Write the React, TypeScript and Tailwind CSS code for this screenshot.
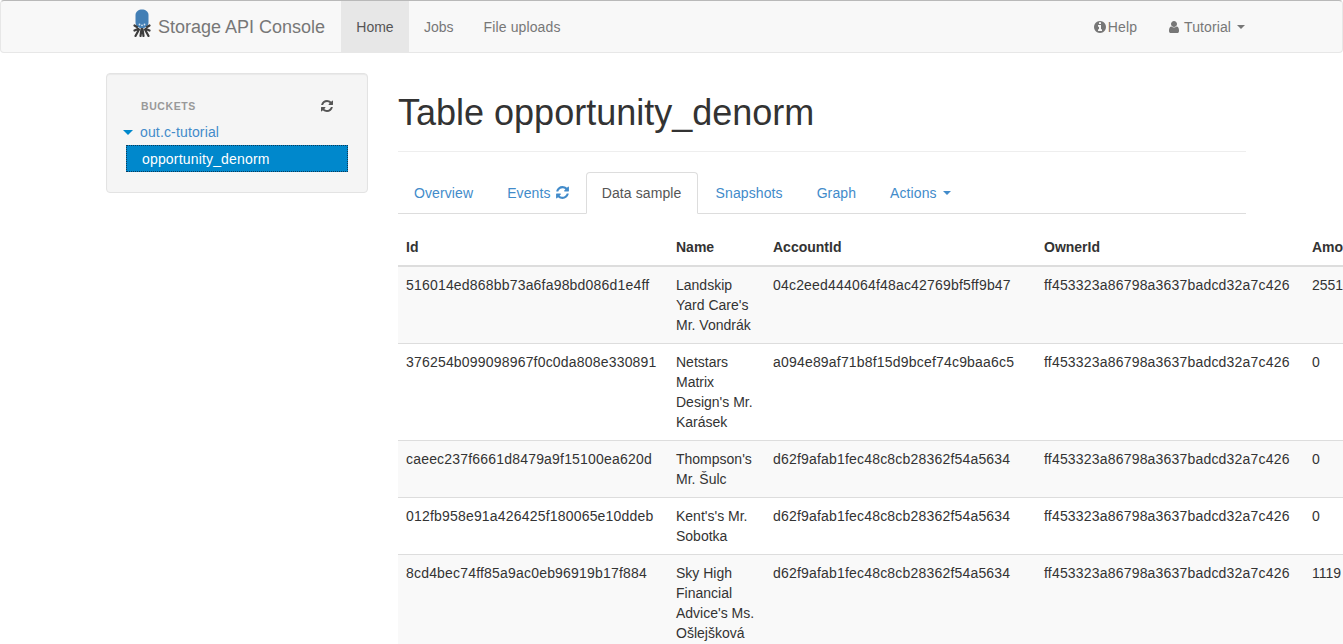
import React from "react";

const REFRESH = "M1639 1056q0 5-1 7-64 268-268 434.5t-478 166.5q-146 0-282.5-55t-243.5-157l-129 129q-19 19-45 19t-45-19-19-45v-448q0-26 19-45t45-19h448q26 0 45 19t19 45-19 45l-137 137q71 66 161 102t187 36q134 0 250-65t186-179q11-17 53-117 8-23 30-23h192q13 0 22.5 9.5t9.5 22.5zm25-800v448q0 26-19 45t-45 19h-448q-26 0-45-19t-19-45 19-45l138-138q-148-137-349-137-134 0-250 65t-186 179q-11 17-53 117-8 23-30 23h-199q-13 0-22.5-9.5t-9.5-22.5v-7q65-268 270-434.5t480-166.5q146 0 284 55.5t245 156.5l130-129q19-19 45-19t45 19 19 45z";
const INFO = "M1152 1376v-160q0-14-9-23t-23-9h-96v-512q0-14-9-23t-23-9h-320q-14 0-23 9t-9 23v160q0 14 9 23t23 9h96v320h-96q-14 0-23 9t-9 23v160q0 14 9 23t23 9h448q14 0 23-9t9-23zm-128-896v-160q0-14-9-23t-23-9h-192q-14 0-23 9t-9 23v160q0 14 9 23t23 9h192q14 0 23-9t9-23zm640 416q0 209-103 385.5t-279.5 279.5-385.5 103-385.5-103-279.5-279.5-103-385.5 103-385.5 279.5-279.5 385.5-103 385.5 103 279.5 279.5 103 385.5z";
const USER = "M1536 1399q0 109-62.5 187t-150.5 78h-854q-88 0-150.5-78t-62.5-187q0-85 8.5-160.5t31.5-152 58.5-131 94-89 134.5-34.5q131 128 313 128t313-128q76 0 134.5 34.5t94 89 58.5 131 31.5 152 8.5 160.5zm-256-887q0 159-112.5 271.5t-271.5 112.5-271.5-112.5-112.5-271.5 112.5-271.5 271.5-112.5 271.5 112.5 112.5 271.5z";

function Fa({ d, className }: { d: string; className: string }) {
  return (
    <svg viewBox="0 0 1792 1792" className={className} fill="currentColor" aria-hidden="true">
      <path d={d} />
    </svg>
  );
}

function Logo() {
  return (
    <svg viewBox="0 0 18 28" className="w-[18px] h-[28px] shrink-0 -mt-[8px]" aria-hidden="true">
      <path d="M2.5 6 C2.5 -1.5 15.5 -1.5 15.5 6 L15.5 13 C15.5 17.5 12.5 19 9 19 C5.5 19 2.5 17.5 2.5 13 Z" fill="#437fb5" />
      <circle cx="6.5" cy="15.5" r="0.9" fill="#d5e4f0" />
      <circle cx="9" cy="16.3" r="0.9" fill="#d5e4f0" />
      <circle cx="11.5" cy="15.5" r="0.9" fill="#d5e4f0" />
      <g stroke="#3d3d3d" strokeWidth="2.2" fill="none" strokeLinecap="round">
        <path d="M4 18 L1.5 16.5 M5 20 L1.5 21.5 M6 20.5 L2.5 27 M8.5 20 L7.5 27 M9.5 20 L10.5 27 M12 20.5 L15.5 27 M13 20 L16.5 21.5 M14 18 L16.5 16.5" />
      </g>
    </svg>
  );
}

const rows = [
  ["516014ed868bb73a6fa98bd086d1e4ff", "Landskip Yard Care's Mr. Vondrák", "04c2eed444064f48ac42769bf5ff9b47", "ff453323a86798a3637badcd32a7c426", "2551"],
  ["376254b099098967f0c0da808e330891", "Netstars Matrix Design's Mr. Karásek", "a094e89af71b8f15d9bcef74c9baa6c5", "ff453323a86798a3637badcd32a7c426", "0"],
  ["caeec237f6661d8479a9f15100ea620d", "Thompson's Mr. Šulc", "d62f9afab1fec48c8cb28362f54a5634", "ff453323a86798a3637badcd32a7c426", "0"],
  ["012fb958e91a426425f180065e10ddeb", "Kent's's Mr. Sobotka", "d62f9afab1fec48c8cb28362f54a5634", "ff453323a86798a3637badcd32a7c426", "0"],
  ["8cd4bec74ff85a9ac0eb96919b17f884", "Sky High Financial Advice's Ms. Ošlejšková", "d62f9afab1fec48c8cb28362f54a5634", "ff453323a86798a3637badcd32a7c426", "1119"],
];

const heads = ["Id", "Name", "AccountId", "OwnerId", "Amount"];

export default function App() {
  return (
    <div className="h-[644px] overflow-hidden bg-white text-[14px] leading-[20px] text-[#333333] font-['Liberation_Sans',Arial,sans-serif]">
      <nav className="h-[53px] flex items-stretch bg-[#f8f8f8] border border-[#e7e7e7] border-t-[#b9b9b9] rounded-[4px] pl-[132px] pr-[82px]">
        <a className="flex items-center gap-[7px] w-[208px] text-[18px] text-[#777777]">
          <Logo />
          <span>Storage API Console</span>
        </a>
        <a className="flex items-center justify-center w-[68px] bg-[#e7e7e7] text-[#555555]">Home</a>
        <a className="flex items-center px-[15px] text-[#777777]">Jobs</a>
        <a className="flex items-center px-[15px] tracking-[0.12px] text-[#777777]">File uploads</a>
        <div className="ml-auto flex items-stretch">
          <a className="flex items-center gap-[1px] px-[15px] text-[#777777] tracking-[0.1px]">
            <Fa d={INFO} className="w-[14px] h-[14px]" />
            Help
          </a>
          <a className="flex items-center gap-[3px] px-[15px] text-[#777777] tracking-[0.1px]">
            <Fa d={USER} className="w-[14px] h-[14px]" />
            Tutorial
            <span className="ml-[3px] w-0 h-0 border-x-[4px] border-x-transparent border-t-[4px] border-t-[#777777]" />
          </a>
        </div>
      </nav>

      <div className="flex items-start pl-[106px] pt-[20px]">
        <aside className="w-[262px] h-[120px] shrink-0 bg-[#f5f5f5] border border-[#e3e3e3] rounded-[4px] shadow-[inset_0_1px_1px_rgba(0,0,0,0.05)] pt-[24px] pl-[16px] pr-[19px]">
          <div className="flex items-center justify-between pl-[18px] pr-[14px] h-[16px]">
            <span className="text-[10.5px] font-bold tracking-[0.6px] text-[#999999] uppercase">Buckets</span>
            <Fa d={REFRESH} className="w-[14px] h-[14px] text-[#555555]" />
          </div>
          <div className="flex items-center gap-[7px] h-[20px] mt-[8px] text-[#428bca]">
            <span className="w-0 h-0 border-x-[5px] border-x-transparent border-t-[5px] border-t-[#0088cc]" />
            <span className="tracking-[0.15px]">out.c-tutorial</span>
          </div>
          <div className="mt-[3px] ml-[3px] h-[27px] flex items-center pl-[15px] bg-[#0088cc] text-white tracking-[0.17px] border border-dotted border-[#0b3a5a]">
            opportunity_denorm
          </div>
        </aside>

        <main className="w-[848px] ml-[30px] shrink-0">
          <h1 className="text-[36px] leading-[40px] font-normal mt-[20px] pb-[18px] border-b border-[#eeeeee]">Table opportunity_denorm</h1>
          <ul className="mt-[20px] h-[42px] flex border-b border-[#dddddd] tracking-[0.1px]">
            <li className="flex items-center px-[16px] mr-[2px] text-[#428bca]">Overview</li>
            <li className="flex items-center gap-[4px] pl-[16px] pr-[14px] mr-[2px] text-[#428bca]">
              Events
              <Fa d={REFRESH} className="w-[15px] h-[15px]" />
            </li>
            <li className="flex items-center justify-center w-[112px] mr-[2px] h-[42px] bg-white border border-[#dddddd] border-b-white rounded-t-[4px] text-[#555555]">Data sample</li>
            <li className="flex items-center px-[16px] mr-[2px] text-[#428bca]">Snapshots</li>
            <li className="flex items-center px-[16px] mr-[2px] text-[#428bca]">Graph</li>
            <li className="flex items-center gap-[6px] px-[16px] text-[#428bca]">
              Actions
              <span className="w-0 h-0 border-x-[4px] border-x-transparent border-t-[4px] border-t-[#428bca]" />
            </li>
          </ul>
          <table className="mt-[15px] border-collapse table-fixed w-[1000px]">
            <colgroup>
              <col className="w-[270px]" />
              <col className="w-[97px]" />
              <col className="w-[271px]" />
              <col className="w-[268px]" />
              <col className="w-[94px]" />
            </colgroup>
            <thead>
              <tr>
                {heads.map((h) => (
                  <th key={h} className="text-left font-bold align-bottom p-[8px] border-b-2 border-[#dddddd] whitespace-nowrap">{h}</th>
                ))}
              </tr>
            </thead>
            <tbody>
              {rows.map((r, i) => (
                <tr key={r[0]} className={i % 2 === 0 ? "bg-[#f9f9f9]" : "bg-white"}>
                  {r.map((c, j) => (
                    <td key={j} className={j === 1 || j === 4 ? "align-top p-[8px] border-t border-[#dddddd]" : "align-top p-[8px] border-t border-[#dddddd] tracking-[0.19px]"}>{c}</td>
                  ))}
                </tr>
              ))}
            </tbody>
          </table>
        </main>
      </div>
    </div>
  );
}
